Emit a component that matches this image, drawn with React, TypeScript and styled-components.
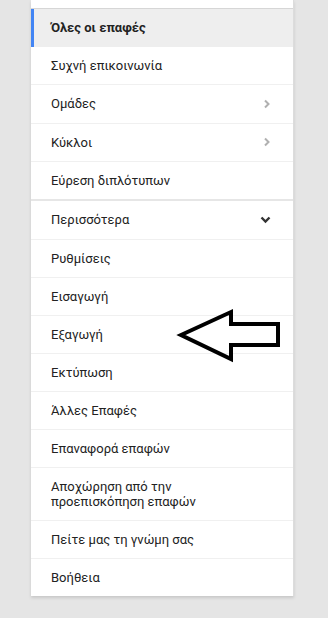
import React from "react";
import styled, { createGlobalStyle } from "styled-components";

const GlobalStyle = createGlobalStyle`
  html, body {
    margin: 0;
    padding: 0;
    background: #e5e5e5;
    font-family: Roboto, "Noto Sans", Arial, sans-serif;
  }
`;

const Page = styled.div`
  position: relative;
  width: 328px;
  height: 618px;
  padding-left: 31px;
  box-sizing: border-box;
`;

const Panel = styled.nav`
  width: 263px;
  background: #fff;
  border-right: 1px solid #dcdcdc;
  box-sizing: border-box;
  box-shadow: 0 2px 3px rgba(0, 0, 0, 0.13);
`;

const TopCap = styled.div`
  height: 8px;
  border-bottom: 1px solid #d6d6d6;
`;

const Item = styled.div<{ $active?: boolean; $divider?: boolean; $last?: boolean; $loose?: boolean }>`
  display: flex;
  align-items: center;
  justify-content: space-between;
  padding: ${(p) => (p.$divider ? "11px" : p.$loose ? "11.25px" : "11px")} 22px;
  padding-left: ${(p) => (p.$active ? "17px" : "20px")};
  min-height: 15px;
  font-size: 13px;
  line-height: 15px;
  color: #222;
  font-weight: ${(p) => (p.$active ? 700 : 400)};
  background: ${(p) => (p.$active ? "#eeeeee" : "#fff")};
  border-left: ${(p) => (p.$active ? "3px solid #4285f4" : "none")};
  border-bottom: ${(p) =>
    p.$last || p.$active ? "none" : p.$divider ? "2px solid #e6e6e6" : "1px solid #f0f0f0"};
`;

const Label = styled.span`
  max-width: 190px;
`;

const Arrow = styled.svg`
  position: absolute;
  left: 176px;
  top: 308px;
`;

const ChevronRight = () => (
  <svg width="8" height="10" viewBox="0 0 8 10">
    <polyline points="2,1.5 5.5,5 2,8.5" fill="none" stroke="#b0b0b0" strokeWidth="2" />
  </svg>
);

const ChevronDown = () => (
  <svg width="11" height="8" viewBox="0 0 11 8">
    <polyline points="1.5,1.5 5.5,5.5 9.5,1.5" fill="none" stroke="#333" strokeWidth="2.4" />
  </svg>
);

type Entry = { label: string; icon?: "right" | "down"; active?: boolean; divider?: boolean; loose?: boolean };

const entries: Entry[] = [
  { label: "Όλες οι επαφές", active: true, loose: true },
  { label: "Συχνή επικοινωνία", loose: true },
  { label: "Ομάδες", icon: "right", loose: true },
  { label: "Κύκλοι", icon: "right", loose: true },
  { label: "Εύρεση διπλότυπων", divider: true },
  { label: "Περισσότερα", icon: "down", loose: true },
  { label: "Ρυθμίσεις" },
  { label: "Εισαγωγή" },
  { label: "Εξαγωγή" },
  { label: "Εκτύπωση" },
  { label: "Άλλες Επαφές" },
  { label: "Επαναφορά επαφών" },
  { label: "Αποχώρηση από την προεπισκόπηση επαφών" },
  { label: "Πείτε μας τη γνώμη σας" },
  { label: "Βοήθεια" },
];

export default function App() {
  return (
    <Page>
      <GlobalStyle />
      <Panel>
        <TopCap />
        {entries.map((e, i) => (
          <Item
            key={e.label}
            $active={e.active}
            $divider={e.divider}
            $loose={e.loose}
            $last={i === entries.length - 1}
          >
            <Label>{e.label}</Label>
            {e.icon === "right" && <ChevronRight />}
            {e.icon === "down" && <ChevronDown />}
          </Item>
        ))}
      </Panel>
      <Arrow width="108" height="56" viewBox="0 0 108 56">
        <polygon
          points="5,27 55,4 55,16 102,16 102,37 55,37 55,51"
          fill="none"
          stroke="#000"
          strokeWidth="4"
          strokeLinejoin="miter"
        />
      </Arrow>
    </Page>
  );
}
